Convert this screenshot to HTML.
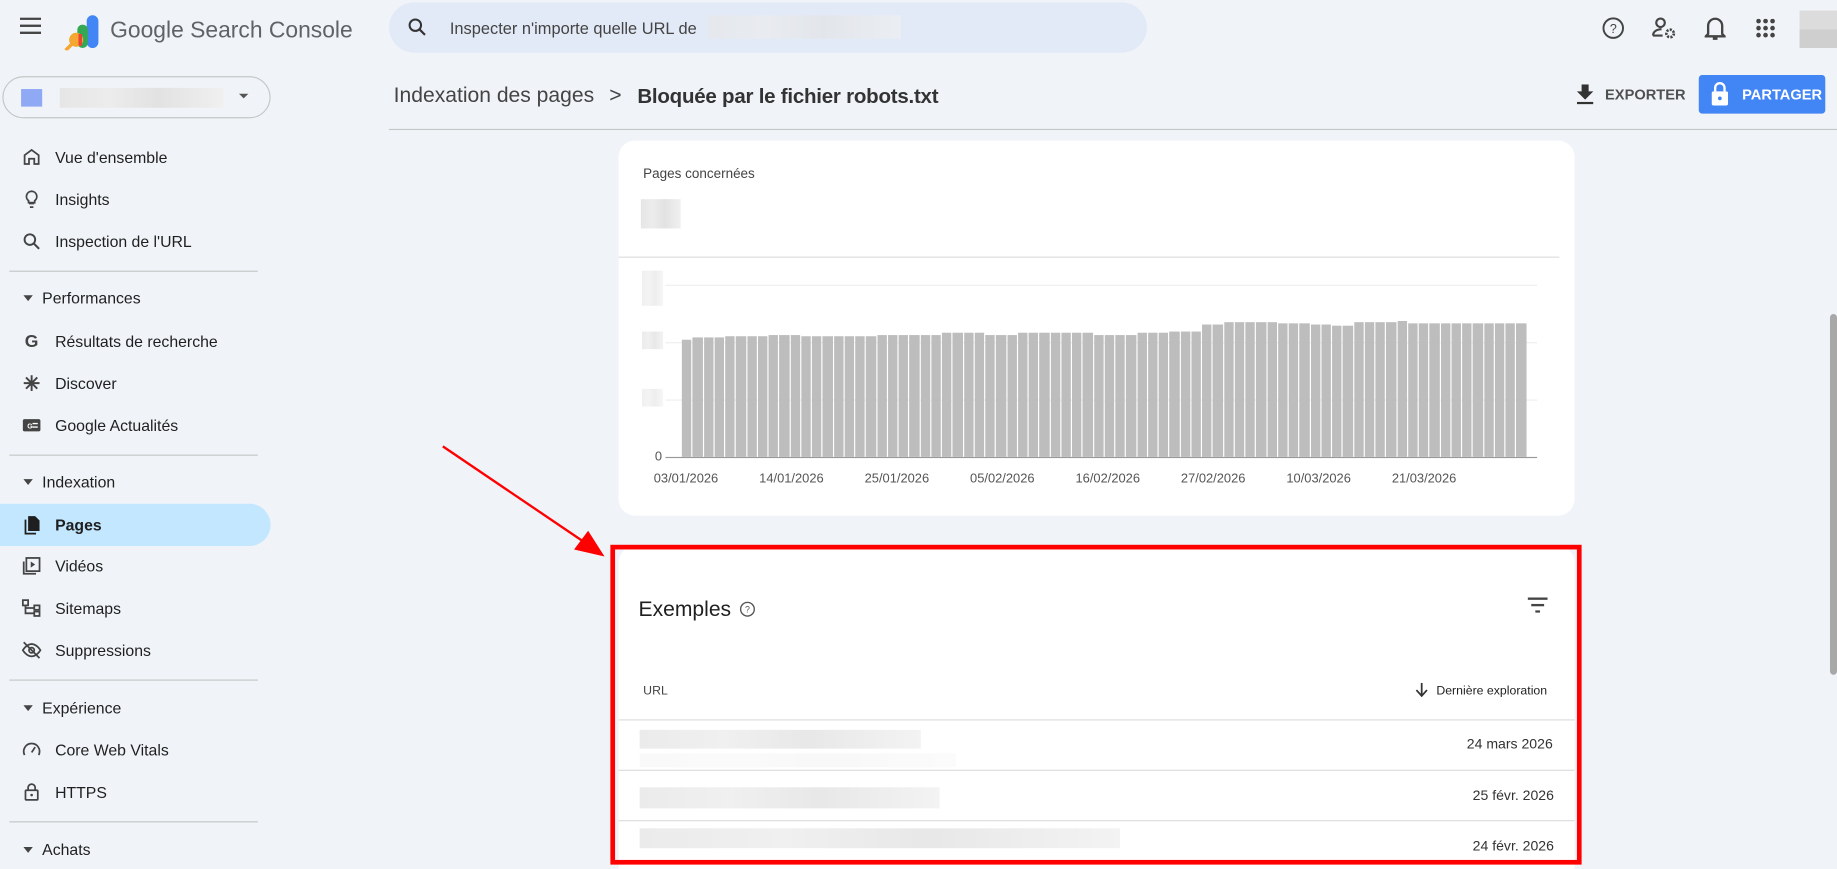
<!DOCTYPE html>
<html><head><meta charset="utf-8"><style>
*{box-sizing:border-box;margin:0;padding:0}
html,body{width:1837px;height:869px;overflow:hidden;background:#f0f4f9;font-family:"Liberation Sans",Arial,sans-serif;color:#1f1f1f}
#w{width:1568px;height:742px;transform:scale(1.17156);transform-origin:0 0;position:relative}
.abs{position:absolute}
.it{position:absolute;left:0;height:36px;width:230px;display:flex;align-items:center;font-size:13.5px;color:#1f1f1f}
.it svg{position:absolute;left:18px;width:18px;height:18px}
.it span{position:absolute;left:47px}
.sec{position:absolute;left:20px;font-size:13.5px;color:#1f1f1f}
.sec:before{content:"";display:inline-block;border-left:4px solid transparent;border-right:4px solid transparent;border-top:5px solid #444;margin-right:8px;vertical-align:2px}
.hr{position:absolute;left:8px;width:212px;height:1px;background:#c4c7c5}
.blur{position:absolute;background:linear-gradient(90deg,#e6e6e6,#ececec 30%,#e2e2e2 60%,#f0f0f0)}
.card{position:absolute;background:#fff;border-radius:14px}
.bars{position:absolute;left:582px;top:230px;width:720px;height:160px;display:flex;align-items:flex-end;gap:1px}
.bars i{flex:1;background:#bdbdbd;display:block}
.xl{position:absolute;top:403px;font-size:11px;color:#555}
</style></head><body><div id="w">
<svg class="abs" style="left:17px;top:15px" width="18" height="14"><rect y="0" width="18" height="2" fill="#444"/><rect y="6" width="18" height="2" fill="#444"/><rect y="12" width="18" height="2" fill="#444"/></svg>
<svg class="abs" style="left:54px;top:11px" width="32" height="32" viewBox="0 0 32 32"><rect x="20" y="2" width="10" height="28" rx="5" fill="#4285f4"/><rect x="12" y="10" width="9" height="20" rx="4.5" fill="#34a853"/><circle cx="11" cy="23" r="6" fill="#f4a731"/><path d="M7 27 L2 32" stroke="#f4a731" stroke-width="3"/><rect x="13" y="18" width="3" height="10" fill="#ea4335"/></svg>
<div class="abs" style="left:94px;top:15px;font-size:19.5px;color:#5f6368">Google Search Console</div>
<div class="abs" style="left:332px;top:2px;width:647px;height:43px;border-radius:22px;background:#e3eaf7"></div>
<svg class="abs" style="left:347px;top:14px" width="18" height="18" viewBox="0 0 24 24"><circle cx="10" cy="10" r="6.5" fill="none" stroke="#333" stroke-width="2.3"/><path d="M15 15l6 6" stroke="#333" stroke-width="2.5"/></svg>
<div class="abs" style="left:384px;top:16px;font-size:14px;color:#444">Inspecter n'importe quelle URL de</div>
<div class="blur" style="left:604px;top:13px;width:165px;height:20px;opacity:.6"></div>
<svg class="abs" style="left:1367px;top:14px" width="20" height="20" viewBox="0 0 24 24"><circle cx="12" cy="12" r="10" fill="none" stroke="#444" stroke-width="2"/><text x="12" y="17" font-size="13" text-anchor="middle" fill="#444" font-family="Liberation Sans">?</text></svg>
<svg class="abs" style="left:1410px;top:14px" width="22" height="20" viewBox="0 0 24 22"><circle cx="8" cy="6" r="4" fill="none" stroke="#444" stroke-width="2"/><path d="M1 18c0-4 4-6 8-6" fill="none" stroke="#444" stroke-width="2"/><path d="M1 18h9" stroke="#444" stroke-width="2"/><circle cx="17" cy="16" r="3.5" fill="none" stroke="#444" stroke-width="2.5" stroke-dasharray="2 1.2"/></svg>
<svg class="abs" style="left:1455px;top:13px" width="18" height="22" viewBox="0 0 18 22"><path d="M3 16V9a6 6 0 0112 0v7l2 2H1z" fill="none" stroke="#444" stroke-width="2"/><path d="M7 20h4" stroke="#444" stroke-width="2"/></svg>
<svg class="abs" style="left:1499px;top:16px" width="16" height="16"><g fill="#444"><circle cx="2" cy="2" r="2"/><circle cx="8" cy="2" r="2"/><circle cx="14" cy="2" r="2"/><circle cx="2" cy="8" r="2"/><circle cx="8" cy="8" r="2"/><circle cx="14" cy="8" r="2"/><circle cx="2" cy="14" r="2"/><circle cx="8" cy="14" r="2"/><circle cx="14" cy="14" r="2"/></g></svg>
<div class="abs" style="left:1536px;top:9px;width:32px;height:32px;background:linear-gradient(#dcdcdc 50%,#cfcfcf 50%)"></div>
<div class="abs" style="left:2px;top:65px;width:229px;height:36px;border:1px solid #c4c7c5;border-radius:18px"></div>
<div class="abs" style="left:18px;top:76px;width:18px;height:15px;background:#8fa9f5"></div>
<div class="blur" style="left:51px;top:75px;width:140px;height:17px"></div>
<div class="abs" style="left:204px;top:80px;border-left:4px solid transparent;border-right:4px solid transparent;border-top:4px solid #555"></div>
<div class="it" style="top:116px"><svg viewBox="0 0 24 24"><path d="M4 20V10l8-6 8 6v10h-5v-6H9v6z" fill="none" stroke="#444" stroke-width="2"/></svg><span>Vue d'ensemble</span></div>
<div class="it" style="top:152px"><svg viewBox="0 0 24 24"><path d="M9 17h6M10 21h4M12 3a6 6 0 00-3.5 10.8V16h7v-2.2A6 6 0 0012 3z" fill="none" stroke="#444" stroke-width="2"/></svg><span>Insights</span></div>
<div class="it" style="top:188px"><svg viewBox="0 0 24 24"><circle cx="10" cy="10" r="6" fill="none" stroke="#444" stroke-width="2.2"/><path d="M14.5 14.5l6 6" stroke="#444" stroke-width="2.4"/></svg><span>Inspection de l'URL</span></div>
<div class="hr" style="top:231px"></div>
<div class="sec" style="top:247px">Performances</div>
<div class="it" style="top:273px"><svg viewBox="0 0 24 24"><text x="12" y="19" font-size="20" font-weight="bold" text-anchor="middle" fill="#444" font-family="Liberation Sans">G</text></svg><span>Résultats de recherche</span></div>
<div class="it" style="top:309px"><svg viewBox="0 0 24 24"><path d="M12 3v18M3 12h18M5.6 5.6l12.8 12.8M18.4 5.6L5.6 18.4" stroke="#444" stroke-width="2.2"/></svg><span>Discover</span></div>
<div class="it" style="top:345px"><svg viewBox="0 0 24 24"><rect x="2" y="5" width="20" height="14" rx="2" fill="#444"/><text x="7" y="15.5" font-size="8" fill="#fff" font-weight="bold" font-family="Liberation Sans">G</text><path d="M13 10h6M13 14h6" stroke="#fff" stroke-width="1.6"/></svg><span>Google Actualités</span></div>
<div class="hr" style="top:388px"></div>
<div class="sec" style="top:404px">Indexation</div>
<div class="abs" style="left:0;top:430px;width:231px;height:36px;background:#c2e7ff;border-radius:0 18px 18px 0"></div>
<div class="it" style="top:430px"><svg viewBox="0 0 24 24"><path d="M8 2h8l5 5v12H8z" fill="#1f1f1f"/><path d="M5 6v16h12" fill="none" stroke="#1f1f1f" stroke-width="2"/></svg><span style="font-weight:bold">Pages</span></div>
<div class="it" style="top:465px"><svg viewBox="0 0 24 24"><rect x="6" y="3" width="15" height="15" fill="none" stroke="#444" stroke-width="2"/><path d="M3 7v14h14" fill="none" stroke="#444" stroke-width="2"/><path d="M11 7v7l5-3.5z" fill="#444"/></svg><span>Vidéos</span></div>
<div class="it" style="top:501px"><svg viewBox="0 0 24 24"><rect x="2" y="3" width="6" height="6" fill="none" stroke="#444" stroke-width="2"/><rect x="15" y="9" width="6" height="5" fill="none" stroke="#444" stroke-width="2"/><rect x="15" y="16" width="6" height="5" fill="none" stroke="#444" stroke-width="2"/><path d="M5 9v9h10M5 12h10" fill="none" stroke="#444" stroke-width="2"/></svg><span>Sitemaps</span></div>
<div class="it" style="top:537px"><svg viewBox="0 0 24 24"><path d="M2 12s4-7 10-7 10 7 10 7-4 7-10 7S2 12 2 12z" fill="none" stroke="#444" stroke-width="2"/><circle cx="12" cy="12" r="3" fill="none" stroke="#444" stroke-width="2"/><path d="M3 3l18 18" stroke="#444" stroke-width="2"/></svg><span>Suppressions</span></div>
<div class="hr" style="top:580px"></div>
<div class="sec" style="top:597px">Expérience</div>
<div class="it" style="top:622px"><svg viewBox="0 0 24 24"><path d="M4 18a9 9 0 1116 0" fill="none" stroke="#444" stroke-width="2"/><path d="M12 15l4-6" stroke="#444" stroke-width="2"/></svg><span>Core Web Vitals</span></div>
<div class="it" style="top:658px"><svg viewBox="0 0 24 24"><rect x="5" y="10" width="14" height="11" rx="1" fill="none" stroke="#444" stroke-width="2"/><path d="M8 10V7a4 4 0 018 0v3" fill="none" stroke="#444" stroke-width="2"/><circle cx="12" cy="15.5" r="1.5" fill="#444"/></svg><span>HTTPS</span></div>
<div class="hr" style="top:701px"></div>
<div class="sec" style="top:718px">Achats</div>
<div class="abs" style="left:336px;top:71px;font-size:18px;color:#444">Indexation des pages</div>
<div class="abs" style="left:520px;top:71px;font-size:18px;color:#444">&gt;</div>
<div class="abs" style="left:544px;top:72px;font-size:17.5px;color:#333;font-weight:bold;letter-spacing:-.2px">Bloquée par le fichier robots.txt</div>
<svg class="abs" style="left:1346px;top:72px" width="14" height="17" viewBox="0 0 14 17"><path d="M4 0h6v6h4l-7 7-7-7h4z" fill="#333"/><rect y="15" width="14" height="2" fill="#333"/></svg>
<div class="abs" style="left:1370px;top:74px;font-size:12.5px;color:#333;font-weight:bold;opacity:.85">EXPORTER</div>
<div class="abs" style="left:1450px;top:64px;width:108px;height:33px;background:#4285f4;border-radius:3px"></div>
<svg class="abs" style="left:1461px;top:70px" width="14" height="20" viewBox="0 0 14 20"><path d="M3 8V5a4 4 0 018 0v3" fill="none" stroke="#fff" stroke-width="2"/><rect y="8" width="14" height="12" rx="1.5" fill="#fff"/><circle cx="7" cy="14" r="1.6" fill="#4285f4"/></svg>
<div class="abs" style="left:1487px;top:74px;font-size:12.5px;color:#fff;font-weight:bold">PARTAGER</div>
<div class="abs" style="left:332px;top:110px;width:1236px;height:1px;background:#c4c7c5"></div>
<div class="abs" style="left:1562px;top:268px;width:6px;height:308px;background:#a8a8a8;border-radius:3px"></div>
<div class="card" style="left:528px;top:120px;width:816px;height:320px"></div>
<div class="abs" style="left:549px;top:143px;font-size:11.5px;color:#444">Pages concernées</div>
<div class="blur" style="left:547px;top:170px;width:34px;height:25px"></div>
<div class="abs" style="left:528px;top:219px;width:803px;height:1px;background:#ddd"></div>
<div class="abs" style="left:568px;top:243px;width:744px;height:1px;background:#eee"></div>
<div class="abs" style="left:568px;top:292px;width:744px;height:1px;background:#eee"></div>
<div class="abs" style="left:568px;top:341px;width:744px;height:1px;background:#eee"></div>
<div class="abs" style="left:568px;top:390px;width:744px;height:1px;background:#999"></div>
<div class="blur" style="left:548px;top:231px;width:18px;height:30px;opacity:.6"></div>
<div class="blur" style="left:548px;top:283px;width:18px;height:15px;opacity:.8"></div>
<div class="blur" style="left:548px;top:332px;width:18px;height:15px;opacity:.6"></div>
<div class="abs" style="left:559px;top:384px;font-size:11px;color:#555">0</div>
<div class="bars">
<i style="height:100px"></i><i style="height:102px"></i><i style="height:102px"></i><i style="height:102px"></i><i style="height:103px"></i><i style="height:103px"></i><i style="height:103px"></i><i style="height:103px"></i><i style="height:104px"></i><i style="height:104px"></i><i style="height:104px"></i><i style="height:103px"></i><i style="height:103px"></i><i style="height:103px"></i><i style="height:103px"></i><i style="height:103px"></i><i style="height:103px"></i><i style="height:103px"></i><i style="height:104px"></i><i style="height:104px"></i><i style="height:104px"></i><i style="height:104px"></i><i style="height:104px"></i><i style="height:104px"></i><i style="height:106px"></i><i style="height:106px"></i><i style="height:106px"></i><i style="height:106px"></i><i style="height:104px"></i><i style="height:104px"></i><i style="height:104px"></i><i style="height:106px"></i><i style="height:106px"></i><i style="height:106px"></i><i style="height:106px"></i><i style="height:106px"></i><i style="height:106px"></i><i style="height:106px"></i><i style="height:104px"></i><i style="height:104px"></i><i style="height:104px"></i><i style="height:104px"></i><i style="height:106px"></i><i style="height:106px"></i><i style="height:106px"></i><i style="height:107px"></i><i style="height:107px"></i><i style="height:107px"></i><i style="height:113px"></i><i style="height:113px"></i><i style="height:115px"></i><i style="height:115px"></i><i style="height:115px"></i><i style="height:115px"></i><i style="height:115px"></i><i style="height:114px"></i><i style="height:114px"></i><i style="height:114px"></i><i style="height:113px"></i><i style="height:113px"></i><i style="height:112px"></i><i style="height:112px"></i><i style="height:115px"></i><i style="height:115px"></i><i style="height:115px"></i><i style="height:115px"></i><i style="height:116px"></i><i style="height:114px"></i><i style="height:114px"></i><i style="height:114px"></i><i style="height:114px"></i><i style="height:114px"></i><i style="height:114px"></i><i style="height:114px"></i><i style="height:114px"></i><i style="height:114px"></i><i style="height:114px"></i><i style="height:114px"></i>
</div>
<div class="xl" style="left:558px">03/01/2026</div>
<div class="xl" style="left:648px">14/01/2026</div>
<div class="xl" style="left:738px">25/01/2026</div>
<div class="xl" style="left:828px">05/02/2026</div>
<div class="xl" style="left:918px">16/02/2026</div>
<div class="xl" style="left:1008px">27/02/2026</div>
<div class="xl" style="left:1098px">10/03/2026</div>
<div class="xl" style="left:1188px">21/03/2026</div>
<svg class="abs" style="left:370px;top:375px" width="150" height="105" viewBox="0 0 150 105"><path d="M8 6L135 92" stroke="#f00" stroke-width="2"/><path d="M146 100L120 94L132 78z" fill="#f00"/></svg>
<div class="card" style="left:528px;top:466px;width:816px;height:276px;border-radius:14px 14px 0 0"></div>
<div class="abs" style="left:521px;top:465px;width:829px;height:273px;border:4px solid #f00"></div>
<div class="abs" style="left:545px;top:510px;font-size:18px;color:#1f1f1f">Exemples</div>
<svg class="abs" style="left:631px;top:513px" width="14" height="14" viewBox="0 0 24 24"><circle cx="12" cy="12" r="10" fill="none" stroke="#555" stroke-width="2"/><text x="12" y="17" font-size="13" text-anchor="middle" fill="#555" font-family="Liberation Sans">?</text></svg>
<svg class="abs" style="left:1304px;top:510px" width="17" height="13"><rect width="17" height="2" fill="#444"/><rect x="3" y="5.5" width="11" height="2" fill="#444"/><rect x="6.5" y="11" width="4" height="2" fill="#444"/></svg>
<div class="abs" style="left:549px;top:584px;font-size:10.5px;color:#444">URL</div>
<svg class="abs" style="left:1208px;top:583px" width="11" height="12" viewBox="0 0 11 12"><path d="M5.5 0v10M1 6l4.5 5 4.5-5" fill="none" stroke="#333" stroke-width="1.5"/></svg>
<div class="abs" style="left:1226px;top:584px;font-size:10.5px;color:#1f1f1f">Dernière exploration</div>
<div class="abs" style="left:528px;top:614px;width:816px;height:1px;background:#ddd"></div>
<div class="blur" style="left:546px;top:623px;width:240px;height:16px;opacity:.8"></div>
<div class="blur" style="left:546px;top:643px;width:270px;height:12px;opacity:.25"></div>
<div class="abs" style="left:1252px;top:628px;font-size:12px;color:#333">24 mars 2026</div>
<div class="abs" style="left:528px;top:657px;width:816px;height:1px;background:#ddd"></div>
<div class="blur" style="left:546px;top:672px;width:256px;height:18px;opacity:.8"></div>
<div class="abs" style="left:1257px;top:672px;font-size:12px;color:#333">25 févr. 2026</div>
<div class="abs" style="left:528px;top:700px;width:816px;height:1px;background:#ddd"></div>
<div class="blur" style="left:546px;top:707px;width:410px;height:17px;opacity:.8"></div>
<div class="abs" style="left:1257px;top:715px;font-size:12px;color:#333">24 févr. 2026</div>
</div></body></html>
